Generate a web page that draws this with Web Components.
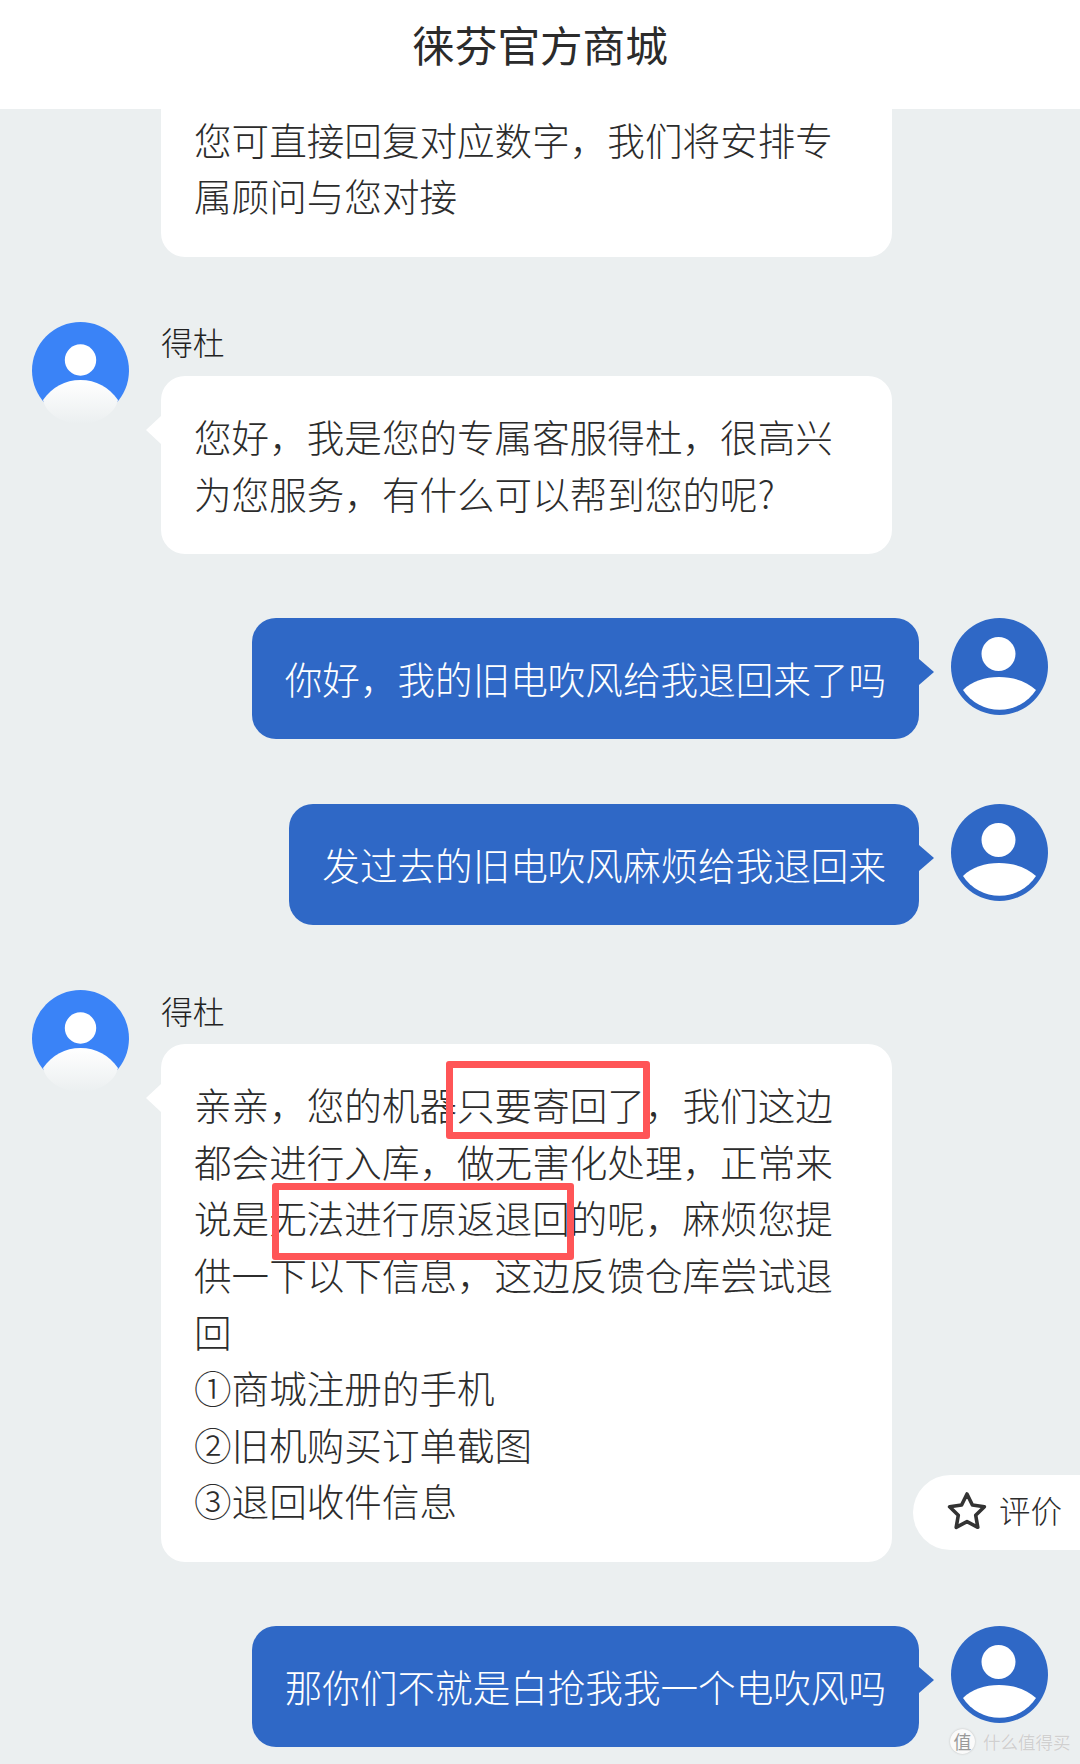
<!DOCTYPE html>
<html lang="zh-CN"><head><meta charset="utf-8"><title>徕芬官方商城</title>
<style>html,body{margin:0;padding:0;background:#ebeff0}</style></head>
<body>
<chat-app>
<chat-header>徕芬官方商城</chat-header>
<chat-list>
<agent-msg first>您可直接回复对应数字，我们将安排专属顾问与您对接</agent-msg>
<agent-msg name="得杜" arrow>您好，我是您的专属客服得杜，很高兴为您服务，有什么可以帮到您的呢?</agent-msg>
<user-msg>你好，我的旧电吹风给我退回来了吗</user-msg>
<user-msg>发过去的旧电吹风麻烦给我退回来</user-msg>
<agent-msg name="得杜" arrow>亲亲，您的机器只要寄回了，我们这边都会进行入库，做无害化处理，正常来说是无法进行原返退回的呢，麻烦您提供一下以下信息，这边反馈仓库尝试退回<br>①商城注册的手机<br>②旧机购买订单截图<br>③退回收件信息<red-box style="left:285px;top:17px;width:204px;height:78px"></red-box><red-box style="left:111px;top:139px;width:302px;height:77px"></red-box></agent-msg>
<user-msg>那你们不就是白抢我我一个电吹风吗</user-msg>
</chat-list>
<rate-pill></rate-pill>
<water-mark></water-mark>
</chat-app>
<script>
function def(name, css, html){
  customElements.define(name, class extends HTMLElement{
    constructor(){super();const r=this.attachShadow({mode:'open'});
      r.innerHTML='<style>'+css+'</style>'+(typeof html==='function'?html(this):html);}
    connectedCallback(){
      if(typeof html==='function'&&!this._d){this._d=1;this.shadowRoot.innerHTML='<style>'+css+'</style>'+html(this);}
    }
  });
}
const FONT='"Noto Sans CJK SC","Noto Sans",sans-serif';
def('chat-app',`:host{display:block;position:relative;width:1080px;height:1764px;overflow:hidden;background:#ebeff0;font-family:${FONT};font-weight:300;color:#2c2c2c}`,'<slot></slot>');
def('chat-header',`:host{display:flex;align-items:center;justify-content:center;height:109px;padding-bottom:21px;box-sizing:border-box;background:#fff;font-size:42.6px;line-height:60px;font-weight:400;color:#2b2b2b}`,'<slot></slot>');
def('chat-list',`:host{display:flex;flex-direction:column;gap:64.6px;padding:0 32px}`,'<slot></slot>');
const avatarLeft=`<svg width="97" height="106" viewBox="0 0 97 106"><defs><linearGradient id="g" x1="0" y1="58" x2="0" y2="102" gradientUnits="userSpaceOnUse"><stop offset="0" stop-color="#fff"/><stop offset="1" stop-color="#ebeff0"/></linearGradient></defs><circle cx="48.500" cy="48.500" r="48.500" fill="#3a83f7"/><circle cx="48.500" cy="38" r="15.700" fill="#fff"/><path d="M11 78C20 65 33 58 48.500 58S77 65 86 78C83 92 66 102 48.500 102S14 92 11 78Z" fill="url(#g)"/></svg>`;
const avatarRight=`<svg width="97" height="97" viewBox="0 0 97 97"><circle cx="48.500" cy="48.500" r="48.500" fill="#2f68c6"/><circle cx="47.500" cy="36" r="17" fill="#fff"/><path d="M12 72C21 63 34 59 48 59S75 63 85 72A43.500 43.500 0 0 1 12 72Z" fill="#fff"/></svg>`;
def('agent-msg',`:host{display:flex;gap:32px;align-items:flex-start}
.av{width:97px;flex:none;height:97px;padding-top:.6px}
.col{width:731px;flex:none}
.name{font-size:31.800px;line-height:40px;height:54.800px;color:#222}
.b{position:relative;background:#fff;border-radius:24px;padding:32px 33px 32.600px;font-size:37.600px;line-height:56.600px;color:#2c2c2c;box-sizing:border-box}
:host([first]) .b{border-radius:0 0 24px 24px;padding-top:1.500px;padding-bottom:32.900px}
:host([arrow]) .b::before{content:"";position:absolute;left:-15px;top:40px;border:14px solid transparent;border-left:0;border-right:15px solid #fff}`,
el=>`<div class="av">${el.hasAttribute('first')?'':avatarLeft}</div><div class="col">${el.hasAttribute('name')?`<div class="name">${el.getAttribute('name')}</div>`:''}<div class="b"><slot></slot></div></div>`);
def('user-msg',`:host{display:flex;gap:32px;justify-content:flex-end;align-items:flex-start}
.b{position:relative;background:#2f68c6;color:#fff;border-radius:24px;padding:32px 33px 32.400px;font-size:37.600px;line-height:56.600px;white-space:nowrap}
.b::after{content:"";position:absolute;right:-15px;top:41px;border:13px solid transparent;border-right:0;border-left:15px solid #2f68c6}
svg{flex:none;display:block}`,
`<div class="b"><slot></slot></div>${avatarRight}`);
def('red-box',`:host{display:block;position:absolute;box-sizing:border-box;border:7px solid #ff5557;border-radius:3px}`,'');
def('rate-pill',`:host{position:absolute;left:913px;top:1475px;width:167px;height:75px;display:flex;align-items:center;gap:11px;padding:0 0 4px 33px;box-sizing:border-box;background:#fff;border-radius:38px 0 0 38px;font-size:31.500px;color:#2c2c2c}
svg{flex:none}
span{margin-top:-3px}`,
`<svg width="42" height="40" viewBox="0 0 42 40"><path d="M21 3l5.400 11 12 1.800-8.700 8.500 2.100 12L21 30.600 10.200 36.300l2.100-12-8.700-8.500 12-1.800z" fill="none" stroke="#333" stroke-width="3.600" stroke-linejoin="round"/></svg><span>评价</span>`);
def('water-mark',`:host{position:absolute;left:950px;top:1729px;display:flex;align-items:center;gap:8px;font-size:17.500px;font-weight:400;color:#d0d0d0;text-shadow:0 0 1px #fff}
i{font-style:normal;width:25px;height:25px;border-radius:50%;background:#fafafa;box-shadow:0 0 2px #bbb;color:#999;text-shadow:none;display:flex;align-items:center;justify-content:center;font-size:18px;line-height:25px}`,
`<i>值</i><span>什么值得买</span>`);
</script>
</body></html>
